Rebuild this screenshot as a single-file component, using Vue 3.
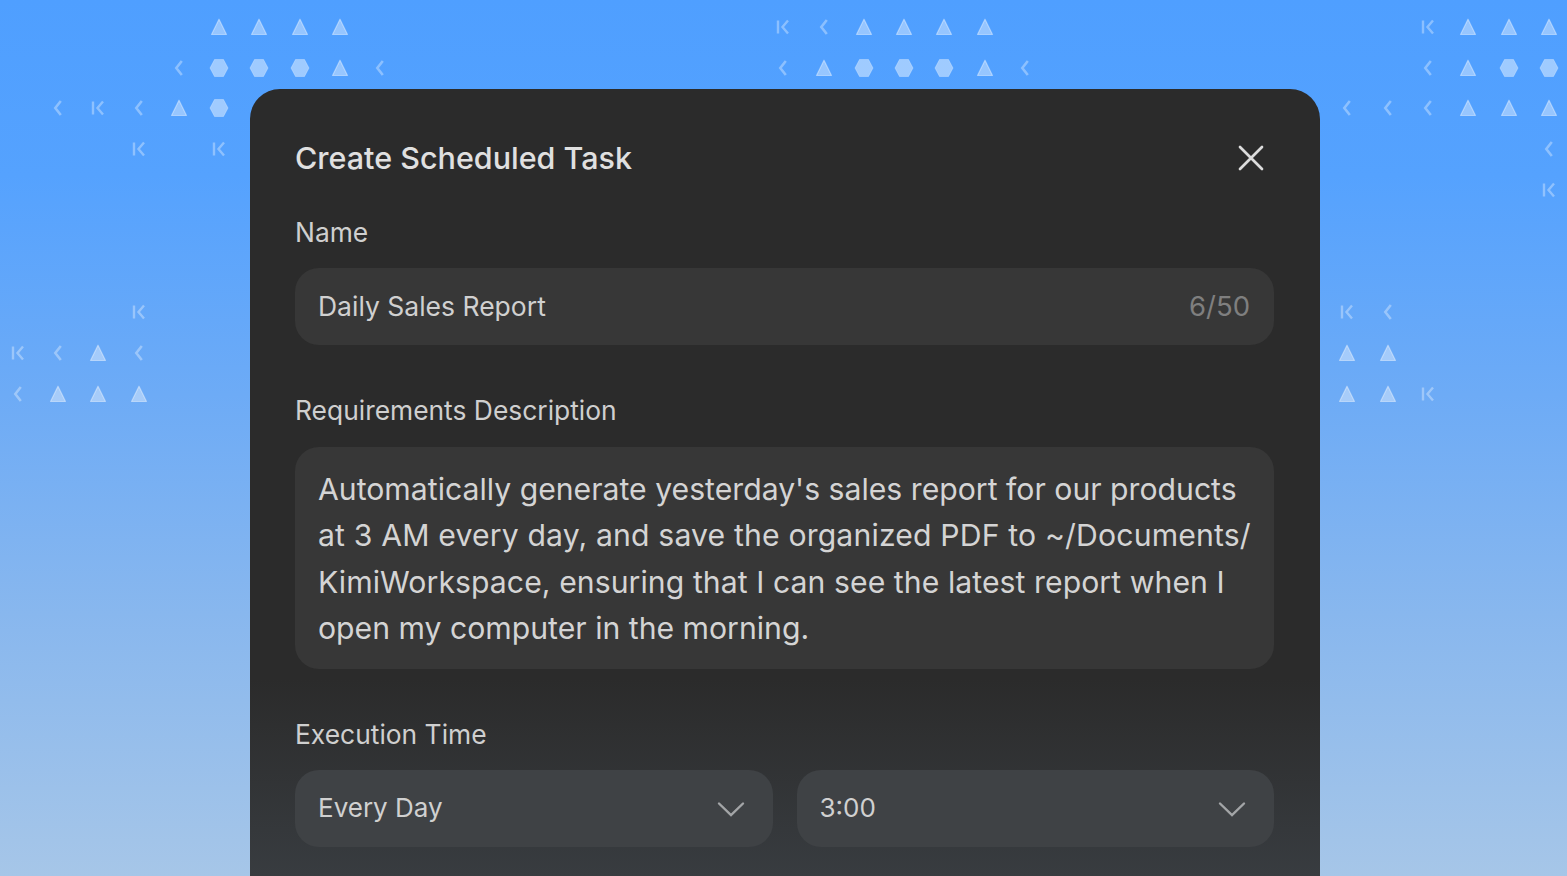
<template>
  <div class="page">
    <div class="pattern" aria-hidden="true">
      <span
        v-for="(cell, idx) in cells"
        :key="idx"
        class="cell"
        :style="{ gridRow: cell.row + 1, gridColumn: cell.col + 1 }"
      >
        <svg v-if="cell.kind === 't'" class="shape" viewBox="0 0 20 20">
          <path d="M10 2.2 L17.5 17.5 H2.5 Z" fill="currentColor" stroke="currentColor" stroke-width="1.2" stroke-linejoin="round" />
        </svg>
        <svg v-else-if="cell.kind === 'h'" class="shape hex" viewBox="0 0 20 20">
          <path d="M5.5 1.5 H14.5 L19 10 L14.5 18.5 H5.5 L1 10 Z" fill="currentColor" stroke="currentColor" stroke-width="0.6" stroke-linejoin="round" />
        </svg>
        <svg v-else-if="cell.kind === 'c'" class="shape thin" viewBox="0 0 20 20">
          <path d="M12.8 3 L7.3 10 L12.8 17" fill="none" stroke="currentColor" stroke-width="2.6" />
        </svg>
        <svg v-else class="shape thin" viewBox="0 0 20 20">
          <path d="M5 3.5 V16.5 M15 3.5 L9.5 10 L15 16.5" fill="none" stroke="currentColor" stroke-width="2.4" />
        </svg>
      </span>
    </div>

    <section class="dialog">
      <header class="dialog-head">
        <h2 class="dialog-title">Create Scheduled Task</h2>
        <button class="close-btn" aria-label="Close">
          <svg viewBox="0 0 28 28" width="28" height="28">
            <path d="M3 3 L25 25 M25 3 L3 25" fill="none" stroke="#dcdcdc" stroke-width="2.7" stroke-linecap="round" />
          </svg>
        </button>
      </header>

      <label class="field-label name-label">Name</label>
      <div class="input-box">
        <span class="input-value">Daily Sales Report</span>
        <span class="counter">6/50</span>
      </div>

      <label class="field-label desc-label">Requirements Description</label>
      <div class="text-box">
        Automatically generate yesterday's sales report for our products<br>
        <span class="wide-line">at 3 AM every day, and save the organized PDF to ~/Documents/</span><br>
        <span class="mid-line">KimiWorkspace, ensuring that I can see the latest report when I</span><br>
        open my computer in the morning.
      </div>

      <label class="field-label time-label">Execution Time</label>
      <div class="select-row">
        <div v-for="opt in selects" :key="opt" class="select-box">
          <span class="select-value">{{ opt }}</span>
          <svg class="chevron" viewBox="0 0 28 16" width="28" height="16">
            <path d="M2 2.5 L14 14 L26 2.5" fill="none" stroke="#a3a5a7" stroke-width="2.4" stroke-linecap="round" />
          </svg>
        </div>
      </div>
    </section>
  </div>
</template>

<script setup>
const selects = ['Every Day', '3:00']

// [row, start column, shapes] - t triangle, h hexagon, c chevron, k K mark
const runs = [
  [0, 5, 'tttt'], [0, 19, 'kctttt'], [0, 35, 'kttt'],
  [1, 4, 'chhhtc'], [1, 19, 'cthhhtc'], [1, 35, 'cthh'],
  [2, 1, 'ckcth'], [2, 33, 'cccttt'],
  [3, 3, 'k'], [3, 5, 'k'], [3, 38, 'c'],
  [4, 38, 'k'],
  [7, 3, 'k'], [7, 33, 'kc'],
  [8, 0, 'kctc'], [8, 33, 'tt'],
  [9, 0, 'cttt'], [9, 33, 'ttk']
]

const cells = runs.flatMap(([row, start, shapes]) =>
  shapes.split('').map((kind, i) => ({ row, col: start + i, kind }))
)
</script>

<style scoped>
.page {
  position: relative;
  width: 1567px;
  height: 876px;
  overflow: hidden;
  padding-top: 89px;
  box-sizing: border-box;
  background: linear-gradient(180deg, #4f9fff 0%, #55a2fe 20%, #6dabf6 45%, #88b7ee 70%, #a6c6e8 100%);
  font-family: "Inter", "Noto Sans", sans-serif;
}

.pattern {
  position: absolute;
  left: -2.5px;
  top: 6.5px;
  display: grid;
  grid-template-columns: repeat(39, 40.3px);
  grid-template-rows: repeat(10, 40.78px);
}

.cell {
  display: flex;
  align-items: center;
  justify-content: center;
  color: rgba(255, 255, 255, 0.4);
}

.shape {
  width: 20px;
  height: 20px;
}

.shape.hex {
  color: rgba(255, 255, 255, 0.45);
}

.shape.thin {
  color: rgba(255, 255, 255, 0.34);
}

.dialog {
  position: relative;
  width: 1070px;
  height: 860px;
  margin-left: 250px;
  box-sizing: border-box;
  padding: 45px 46px 0 45px;
  border-radius: 30px;
  background: linear-gradient(180deg, #2b2b2b 0, #2b2b2b 590px, #383c40 787px);
}

.dialog-head {
  display: flex;
  align-items: center;
  justify-content: space-between;
  height: 48px;
}

.dialog-title {
  margin: 0 0 2px;
  font-size: 30.5px;
  font-weight: 500;
  color: #e0e0e0;
}

.close-btn {
  width: 28px;
  height: 28px;
  margin-right: 9px;
  padding: 0;
  border: none;
  background: none;
  line-height: 0;
}

.field-label {
  display: block;
  height: 36px;
  line-height: 34px;
  font-size: 26.4px;
  color: #cfcfcf;
}

.name-label {
  margin-top: 33px;
  margin-bottom: 17px;
}

.desc-label {
  margin-top: 48px;
  margin-bottom: 18px;
}

.time-label {
  margin-top: 48px;
  margin-bottom: 17px;
}

.input-box,
.select-box {
  display: flex;
  align-items: center;
  justify-content: space-between;
  height: 77px;
  padding: 0 23px 2px;
  box-sizing: border-box;
  border-radius: 24px;
}

.input-box {
  padding-right: 24px;
  background: #373737;
}

.input-value {
  font-size: 26.5px;
  color: #d0d0d0;
}

.select-value {
  font-size: 26px;
  color: #d0d0d0;
}

.counter {
  font-size: 27.5px;
  color: #7f7f7f;
}

.text-box {
  height: 222px;
  padding: 19px 23px 0;
  box-sizing: border-box;
  border-radius: 24px;
  background: #373737;
  font-size: 30.2px;
  line-height: 46.3px;
  white-space: nowrap;
  color: #d4d4d4;
}

.wide-line {
  letter-spacing: 0.15px;
}

.mid-line {
  letter-spacing: 0.06px;
}

.select-row {
  display: grid;
  grid-template-columns: 1fr 1fr;
  gap: 24px;
}

.select-box {
  background: #3f4245;
}

.chevron {
  margin-top: 2px;
  margin-right: 5px;
}
</style>

<style>
html, body {
  margin: 0;
  overflow: hidden;
}
</style>
